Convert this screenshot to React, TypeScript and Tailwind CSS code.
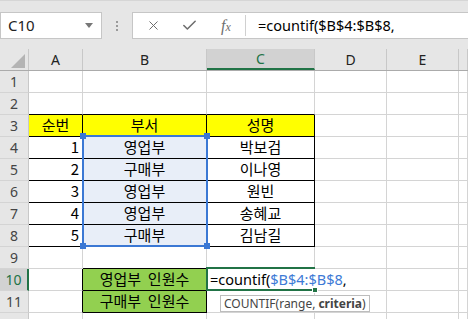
import { X, Check } from "lucide-react";

const KR = "font-['Noto_Sans_CJK_KR','Noto_Sans',sans-serif]";
const UI = "font-['Noto_Sans','Open_Sans',sans-serif]";

const colWidths = ["w-[54px]", "w-[124px]", "w-[108px]", "w-[72px]", "w-[72px]", "flex-1"];
const colLetters = ["A", "B", "C", "D", "E", ""];

type CellData = { text?: string; align?: "center" | "right" };

const data: Record<number, CellData[]> = {
  3: [{ text: "순번" }, { text: "부서" }, { text: "성명" }],
  4: [{ text: "1", align: "right" }, { text: "영업부" }, { text: "박보검" }],
  5: [{ text: "2", align: "right" }, { text: "구매부" }, { text: "이나영" }],
  6: [{ text: "3", align: "right" }, { text: "영업부" }, { text: "원빈" }],
  7: [{ text: "4", align: "right" }, { text: "영업부" }, { text: "송혜교" }],
  8: [{ text: "5", align: "right" }, { text: "구매부" }, { text: "김남길" }],
  10: [{}, { text: "영업부 인원수" }],
  11: [{}, { text: "구매부 인원수" }],
};

function blackRight(r: number, c: number) {
  return (r >= 3 && r <= 8 && c <= 2) || (r >= 10 && r <= 11 && c <= 1);
}
function blackBottom(r: number, c: number) {
  return (r >= 2 && r <= 8 && c <= 2) || (r >= 9 && r <= 11 && c === 1);
}
function fill(r: number, c: number) {
  if (r === 3 && c <= 2) return "bg-[#ffff00]";
  if (r >= 4 && r <= 8 && c === 1) return "bg-[#e8eef8]";
  if (r >= 10 && r <= 11 && c === 1) return "bg-[#92d050]";
  return "bg-white";
}

function Cell({ r, c }: { r: number; c: number }) {
  const d = data[r]?.[c];
  const editing = r === 10 && c === 2;
  const right = editing
    ? "border-r-white"
    : blackRight(r, c)
      ? "border-r-black"
      : "border-r-[#d4d4d4]";
  const bottom = blackBottom(r, c) ? "border-b-black" : "border-b-[#d4d4d4]";
  const justify = editing
    ? "justify-start pl-[3px]"
    : d?.align === "right"
      ? "justify-end pr-[3px]"
      : "justify-center";
  return (
    <div
      className={`${colWidths[c]} h-full shrink-0 border-r border-b ${right} ${bottom} ${fill(r, c)} flex items-center ${justify} text-[15px] text-black ${KR} whitespace-pre overflow-visible`}
    >
      {editing ? (
        <span className={`relative z-10 ${UI} text-[14.5px]`}>
          =countif(<span className="text-[#3d7ad6]">$B$4:$B$8</span>,
        </span>
      ) : d?.text ? (
        d.text.replace(" ", "  ")
      ) : null}
    </div>
  );
}

export default function App() {
  const rows = Array.from({ length: 12 }, (_, i) => i + 1);

  return (
    <div className="relative w-[468px] h-[319px] overflow-hidden bg-[#e6e6e6]">
      {/* formula bar */}
      <div className="h-[49px] flex items-start pt-[11px] border-t border-[#d6d6d6]">
        <div className="w-[102px] h-[27px] bg-white border border-[#c6c6c6] flex items-center pl-[7px] pr-[8px]">
          <span className={`${UI} text-[15px] text-[#222]`}>C10</span>
          <div className="ml-auto w-0 h-0 border-l-[4px] border-r-[4px] border-t-[5px] border-l-transparent border-r-transparent border-t-[#777]" />
        </div>
        <div className="w-[30px] h-[27px] flex flex-col items-center justify-center gap-[2px]">
          <div className="w-[2px] h-[2px] bg-[#9a9a9a]" />
          <div className="w-[2px] h-[2px] bg-[#9a9a9a]" />
          <div className="w-[2px] h-[2px] bg-[#9a9a9a]" />
        </div>
        <div className="flex-1 h-[27px] bg-white border border-r-0 border-[#c6c6c6] flex">
          <div className="w-[112px] flex items-center">
            <X size={15} strokeWidth={1.6} className="text-[#6e6e6e] ml-[13px]" />
            <Check size={17} strokeWidth={2.2} className="text-[#6e6e6e] ml-[20px]" />
            <span className="ml-[23px] font-['Liberation_Serif',serif] italic text-[16px] text-[#6e6e6e] leading-none">
              f<span className="text-[12px]">x</span>
            </span>
          </div>
          <div className="w-px bg-[#d0d0d0] my-[2px]" />
          <div className={`flex items-center pl-[12px] ${UI} text-[14.5px] text-black`}>
            =countif($B$4:$B$8,
          </div>
        </div>
      </div>

      {/* column header */}
      <div className="h-[22px] flex border-b border-[#ababab]">
        <div className="w-[29px] h-full shrink-0 border-r border-[#c8c8c8] flex items-end justify-end pr-[3px] pb-[2px]">
          <div className="w-0 h-0 border-l-[14px] border-b-[14px] border-l-transparent border-b-[#b4b4b4]" />
        </div>
        {colLetters.map((l, c) => (
          <div
            key={c}
            className={`${colWidths[c]} h-full shrink-0 border-r border-[#c8c8c8] flex items-center justify-center ${UI} text-[14px] ${
              c === 2 ? "bg-[#d2d2d2] text-[#217346] border-b-2 border-b-[#217346]" : "text-[#222]"
            }`}
          >
            {l}
          </div>
        ))}
      </div>

      {/* rows */}
      {rows.map((r) => (
        <div key={r} className="h-[22px] flex">
          <div
            className={`w-[29px] h-full shrink-0 border-b border-b-[#d4d4d4] flex items-center justify-center ${UI} text-[14px] ${
              r === 10
                ? "bg-[#d2d2d2] text-[#217346] border-r-2 border-r-[#217346]"
                : "text-[#444] border-r border-r-[#c8c8c8]"
            }`}
          >
            {r < 12 ? r : null}
          </div>
          {colWidths.map((_, c) => (
            <Cell key={c} r={r} c={c} />
          ))}
        </div>
      ))}

      {/* range selection B4:B8 */}
      <div className="absolute left-[82px] top-[135px] w-[126px] h-[112px] border-2 border-[#3b78d4] pointer-events-none">
        <div className="absolute -left-[4px] -top-[4px] w-[6px] h-[6px] bg-[#3b78d4]" />
        <div className="absolute -right-[4px] -top-[4px] w-[6px] h-[6px] bg-[#3b78d4]" />
        <div className="absolute -left-[4px] -bottom-[4px] w-[6px] h-[6px] bg-[#3b78d4]" />
        <div className="absolute -right-[4px] -bottom-[4px] w-[6px] h-[6px] bg-[#3b78d4]" />
      </div>

      {/* active cell C10 */}
      <div className="absolute left-[206px] top-[267px] w-[109px] h-[24px] border-2 border-r-0 border-[#217346] pointer-events-none">
        <div className="absolute -right-[3px] -bottom-[4px] w-[6px] h-[6px] bg-[#217346] border border-white" />
      </div>

      {/* function tooltip */}
      <div className={`absolute left-[220px] top-[295px] h-[17px] px-[3px] bg-white border border-[#bdbdbd] flex items-center ${UI} text-[12px] text-[#444] whitespace-nowrap`}>
        COUNTIF(range, <b className="ml-[3px] font-bold">criteria</b>)
      </div>
    </div>
  );
}
